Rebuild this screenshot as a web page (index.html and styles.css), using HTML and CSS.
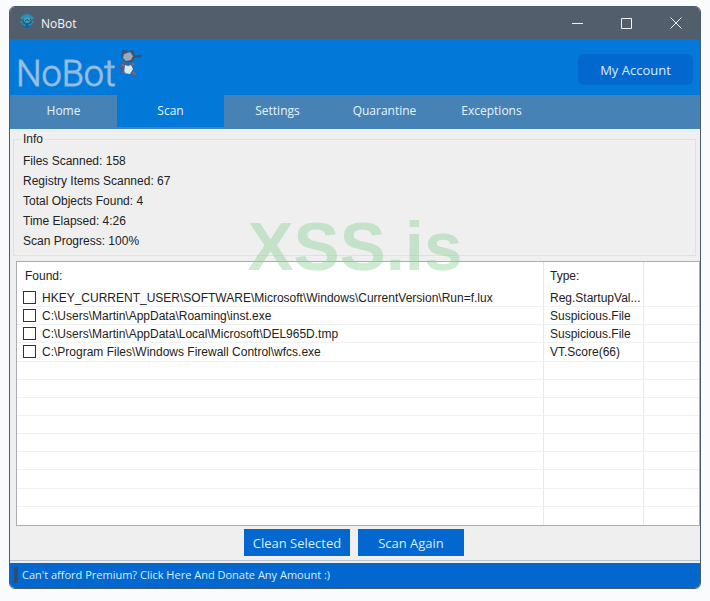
FILE: index.html
```html
<!DOCTYPE html>
<html lang="en">
<head>
<meta charset="utf-8">
<title>NoBot</title>
<link rel="stylesheet" href="styles.css">
</head>
<body>
<div class="window">
  <header class="titlebar">
    <svg class="app-icon" viewBox="0 0 16 16" aria-hidden="true">
      <path d="M3 9h10l-1 4-4 2-4-2z" fill="#12638f"/>
      <path d="M1 5q7-8 14 0l-2 2q-5-5-10 0zM1 8q2 5 6 5l-1-2q-3 0-3-3zM15 8q-2 5-6 5l1-2q3 0 3-3z" fill="#2b8fb5"/>
      <circle cx="8" cy="7" r="3" fill="#39a5c5"/>
      <path d="M6 8q2-3 4 0" fill="none" stroke="#174f71"/>
    </svg>
    <span class="window-title">NoBot</span>
    <div class="controls">
      <button type="button" aria-label="Minimize"><svg viewBox="0 0 12 12"><path d="M0 6.5h11"/></svg></button>
      <button type="button" aria-label="Maximize"><svg viewBox="0 0 12 12"><path d="M.5 1.5h10v10H.5z"/></svg></button>
      <button type="button" aria-label="Close"><svg viewBox="0 0 12 12"><path d="M.5.5l11 11M11.5.5L.5 11.5"/></svg></button>
    </div>
  </header>
  <div class="brand">
    <span class="logo">NoBot</span>
    <svg class="robot" viewBox="0 0 28 32" aria-hidden="true">
      <path d="M6 2l4 0 2 1 5-1 2 5 7 0v2l-7 1-3 4-6 0-5-5z" fill="#35567a"/>
      <path d="M8 6l6-2 3 4-2 4-5 1-3-3z" fill="#9aa9b6"/>
      <path d="M6 14l12 1-1 4 3 11-6-4-8-1-1-4-5-1 6-3z" fill="#47618a"/>
      <path d="M9 17l3 1 3-1 2 4-3 5-6-1z" fill="#d0edee"/>
      <path d="M6 16l2 2M7 24l2 1M16 15l2 2M17 24l2 3" stroke="#86658c" stroke-width="2"/>
    </svg>
    <button type="button" class="account">My Account</button>
  </div>
  <nav class="tabs">
    <a href="#home">Home</a>
    <a href="#scan" class="active" aria-current="page">Scan</a>
    <a href="#settings">Settings</a>
    <a href="#quarantine">Quarantine</a>
    <a href="#exceptions">Exceptions</a>
  </nav>
  <main>
    <fieldset class="info">
      <legend>Info</legend>
      <p>Files Scanned: 158</p>
      <p>Registry Items Scanned: 67</p>
      <p>Total Objects Found: 4</p>
      <p>Time Elapsed: 4:26</p>
      <p>Scan Progress: 100%</p>
    </fieldset>
    <div class="results">
      <table>
        <colgroup><col><col class="type-col"><col class="end-col"></colgroup>
        <thead><tr><th>Found:</th><th>Type:</th><th></th></tr></thead>
        <tbody>
          <tr><td><label><input type="checkbox">HKEY_CURRENT_USER\SOFTWARE\Microsoft\Windows\CurrentVersion\Run=f.lux</label></td><td>Reg.StartupVal...</td><td></td></tr>
          <tr><td><label><input type="checkbox">C:\Users\Martin\AppData\Roaming\inst.exe</label></td><td>Suspicious.File</td><td></td></tr>
          <tr><td><label><input type="checkbox">C:\Users\Martin\AppData\Local\Microsoft\DEL965D.tmp</label></td><td>Suspicious.File</td><td></td></tr>
          <tr><td><label><input type="checkbox">C:\Program Files\Windows Firewall Control\wfcs.exe</label></td><td>VT.Score(66)</td><td></td></tr>
          <tr><td></td><td></td><td></td></tr>
          <tr><td></td><td></td><td></td></tr>
          <tr><td></td><td></td><td></td></tr>
          <tr><td></td><td></td><td></td></tr>
          <tr><td></td><td></td><td></td></tr>
          <tr><td></td><td></td><td></td></tr>
          <tr><td></td><td></td><td></td></tr>
          <tr><td></td><td></td><td></td></tr>
          <tr><td></td><td></td><td></td></tr>
        </tbody>
      </table>
    </div>
    <div class="actions">
      <button type="button">Clean Selected</button>
      <button type="button">Scan Again</button>
    </div>
  </main>
  <footer><a href="#donate">Can't afford Premium? Click Here And Donate Any Amount :)</a></footer>
  <div class="watermark">XSS.is</div>
</div>
</body>
</html>
```
FILE: styles.css
```css
* { box-sizing: border-box; }

body {
  margin: 0;
  padding: 6px 9px 12px;
  background: #fafbfc;
  font-family: "Liberation Sans", Arial, sans-serif;
  font-size: 12px;
  color: #222;
}

button { border: 0; padding: 0; font: inherit; color: inherit; }

.window {
  position: relative;
  border: 1px solid #4b5a6c;
  border-radius: 6px;
  background: #efefef;
  overflow: hidden;
}

.titlebar {
  display: flex;
  align-items: center;
  height: 32px;
  padding-left: 9px;
  background: #535e6c;
  color: #f5f8fa;
  font-family: "Open Sans", sans-serif;
}

.app-icon { width: 16px; height: 16px; margin: 0 6px 4px 0; }

.window-title { flex: 1; }

.controls { display: flex; height: 100%; }

.controls button {
  display: grid;
  place-items: center;
  width: 49px;
  background: transparent;
}

.controls svg {
  width: 12px;
  height: 12px;
  fill: none;
  stroke: #eef2f5;
  overflow: visible;
}

.brand {
  display: flex;
  align-items: center;
  height: 56px;
  padding: 0 7px 0 6px;
  background: #0279d8;
}

.logo {
  padding-top: 13px;
  font-family: Roboto, sans-serif;
  font-size: 36px;
  font-weight: 300;
  line-height: 40px;
  color: #a3c5e2;
  -webkit-text-stroke: 1px #8ab8df;
}

.robot { width: 28px; height: 32px; margin-bottom: 6px; }

.account {
  width: 115px;
  height: 31px;
  margin: 5px 0 0 auto;
  border-radius: 6px;
  background: #0267ce;
  color: #d8efff;
  font-family: "Open Sans", sans-serif;
  font-size: 13px;
}

.tabs { display: flex; height: 34px; background: #4682b5; }

.tabs a {
  width: 107px;
  height: 32px;
  color: #e4f5ff;
  font-family: "Open Sans", sans-serif;
  line-height: 31px;
  text-align: center;
  text-decoration: none;
}

.tabs .active { background: #0279d8; }

main { padding: 4px 0 2px; box-shadow: inset 0 2px #e3f1fb; }

.info {
  margin: 0 4px 0 3px;
  padding: 5px 9px 4px;
  border: 1px solid #dce1e6;
}

.info legend { margin-left: -2px; padding: 0 2px; line-height: 13px; }

.info p { margin: 0; line-height: 20px; }

.results {
  height: 265px;
  margin: 5px 0 3px 6px;
  border: 1px solid #aaaeb2;
  background: #fff;
}

table {
  width: 100%;
  height: 100%;
  border-collapse: separate;
  border-spacing: 0;
  table-layout: fixed;
}

.type-col { width: 100px; }
.end-col { width: 55px; }

th, td {
  padding: 0 6px;
  border-right: 1px solid #e8e9ea;
  font-weight: 400;
  text-align: left;
  white-space: nowrap;
}

th { height: 27px; padding-left: 8px; }
th:nth-child(2) { padding-left: 6px; }
th:last-child, td:last-child { border-right: 0; }
td { height: 18px; line-height: 14px; border-bottom: 1px solid #f0f1f2; }
tr:last-child td { border-bottom: 0; }

label { display: flex; align-items: center; gap: 6px; }

input {
  appearance: none;
  flex: none;
  width: 13px;
  height: 13px;
  margin: 0;
  border: 1px solid #333;
  background: #fff;
}

.actions {
  display: flex;
  justify-content: center;
  gap: 8px;
  height: 32px;
  padding-right: 2px;
  border-bottom: 1px solid #b7c4d1;
}

.actions button {
  width: 106px;
  height: 27px;
  background: #0267ce;
  color: #d8efff;
  font-family: "Open Sans", sans-serif;
  font-size: 13px;
}

footer {
  height: 25px;
  padding: 4px;
  background: #0267ce;
  font-family: "Open Sans", sans-serif;
  font-size: 11px;
  line-height: 16px;
}

footer a {
  display: block;
  padding-left: 4px;
  border-left: 4px solid #304f70;
  color: #d8efff;
  text-decoration: none;
}

.watermark {
  position: absolute;
  top: 200px;
  left: 0;
  width: 100%;
  color: rgba(144, 210, 154, 0.45);
  font-size: 69px;
  font-weight: 700;
  line-height: 80px;
  text-align: center;
  pointer-events: none;
}
```
